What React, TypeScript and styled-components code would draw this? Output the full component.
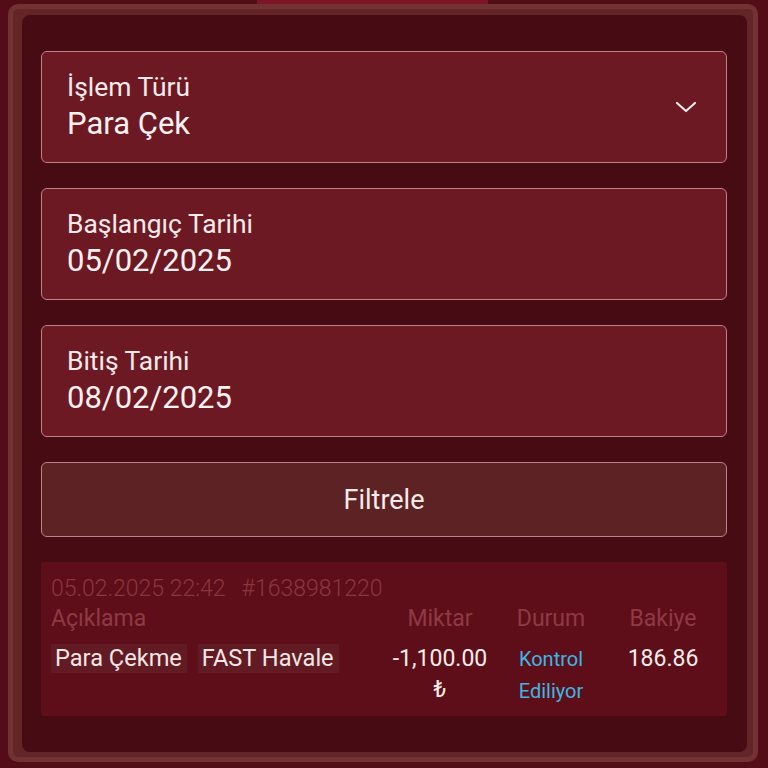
import React from "react";
import styled, { createGlobalStyle } from "styled-components";

const Global = createGlobalStyle`
  html, body {
    margin: 0;
    padding: 0;
    background: #530d17;
    font-family: Roboto, "Noto Sans", "Liberation Sans", sans-serif;
  }
  * { box-sizing: border-box; }
`;

const Page = styled.div`
  width: 768px;
  height: 768px;
  overflow: hidden;
  background: #530d17;
`;

const TabIndicator = styled.div`
  width: 231px;
  height: 4px;
  margin-left: 257px;
  background: #7e1526;
`;

const Frame = styled.div`
  margin: 0 10px 0 8px;
  height: 758px;
  border: 5px solid #723133;
  border-radius: 10px;
  background: #632527;
  padding: 6px 6px 5px 9px;
`;

const Panel = styled.div`
  height: 100%;
  background: #470b14;
  border-radius: 8px;
  padding: 36px 20px 36px 19px;
  display: flex;
  flex-direction: column;
  gap: 25px;
`;

const Field = styled.div`
  height: 112px;
  border: 1px solid #bd8388;
  border-radius: 6px;
  background: #6d1924;
  display: flex;
  align-items: center;
  padding: 0 29px 0 25px;
`;

const FieldText = styled.div`
  flex: 1;
  display: flex;
  flex-direction: column;
  padding-top: 4px;
`;

const Label = styled.div`
  font-size: 26.4px;
  line-height: 30px;
  color: #f6eaea;
`;

const Value = styled.div`
  font-size: 31px;
  line-height: 44px;
  color: #fbf1f1;
`;

const Chevron = styled.svg`
  width: 22px;
  height: 12px;
  flex-shrink: 0;
`;

const FilterButton = styled.button`
  height: 75px;
  border: 1px solid #bd8388;
  border-radius: 6px;
  background: #5d2224;
  color: #f6eaea;
  font-family: inherit;
  font-size: 27px;
  padding: 0;
  cursor: pointer;
`;

const TxBox = styled.div`
  height: 154px;
  background: #5e0e18;
  border-radius: 3px;
  padding: 12px 8px 0 10px;
`;

const MetaLine = styled.div`
  display: flex;
  gap: 16px;
  font-size: 23px;
  line-height: 30px;
  font-weight: 300;
  color: #8a3641;
`;

const TxGrid = styled.div`
  display: grid;
  grid-template-columns: 1fr 110px 112px 112px;
`;

const HeadCell = styled.div<{ $center?: boolean }>`
  font-size: 23px;
  line-height: 30px;
  color: #8e3a45;
  text-align: ${(p) => (p.$center ? "center" : "left")};
`;

const Cell = styled.div<{ $center?: boolean }>`
  padding-top: 9px;
  font-size: 23px;
  line-height: 31px;
  color: #f6eaea;
  text-align: ${(p) => (p.$center ? "center" : "left")};
`;

const Tags = styled.div`
  display: flex;
  align-items: flex-start;
  gap: 11px;
  padding-top: 10px;
`;

const Tag = styled.span`
  display: inline-block;
  padding: 0 5px 0 4px;
  height: 29px;
  line-height: 29px;
  font-size: 23.6px;
  background: #621b23;
  color: #f4e6e6;
`;

const Status = styled.div`
  padding-top: 9px;
  font-size: 20px;
  line-height: 32px;
  color: #3cb6e4;
  text-align: center;
`;

export default function App() {
  return (
    <Page>
      <Global />
      <TabIndicator />
      <Frame>
        <Panel>
          <Field>
            <FieldText>
              <Label>İşlem Türü</Label>
              <Value>Para Çek</Value>
            </FieldText>
            <Chevron viewBox="0 0 22 12" fill="none">
              <path
                d="M2 2 L11 10 L20 2"
                stroke="#f6eaea"
                strokeWidth="2.2"
                strokeLinecap="round"
                strokeLinejoin="round"
              />
            </Chevron>
          </Field>
          <Field>
            <FieldText>
              <Label>Başlangıç Tarihi</Label>
              <Value>05/02/2025</Value>
            </FieldText>
          </Field>
          <Field>
            <FieldText>
              <Label>Bitiş Tarihi</Label>
              <Value>08/02/2025</Value>
            </FieldText>
          </Field>
          <FilterButton>Filtrele</FilterButton>
          <TxBox>
            <MetaLine>
              <span>05.02.2025 22:42</span>
              <span>#1638981220</span>
            </MetaLine>
            <TxGrid>
              <HeadCell>Açıklama</HeadCell>
              <HeadCell $center>Miktar</HeadCell>
              <HeadCell $center>Durum</HeadCell>
              <HeadCell $center>Bakiye</HeadCell>
              <Tags>
                <Tag>Para Çekme</Tag>
                <Tag>FAST Havale</Tag>
              </Tags>
              <Cell $center>-1,100.00 ₺</Cell>
              <Status>Kontrol Ediliyor</Status>
              <Cell $center>186.86</Cell>
            </TxGrid>
          </TxBox>
        </Panel>
      </Frame>
    </Page>
  );
}
